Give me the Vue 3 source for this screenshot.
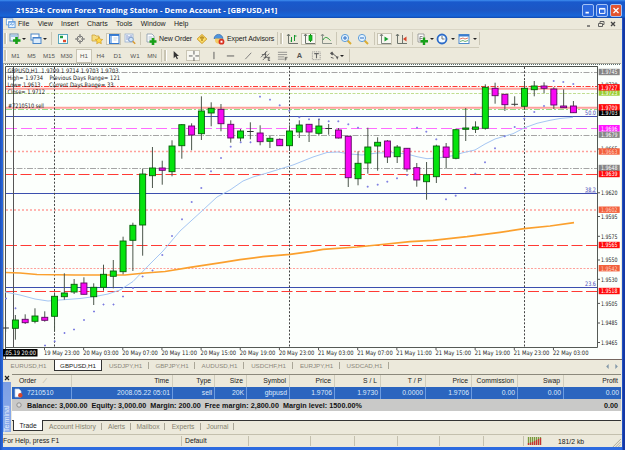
<template>
  <div class="window">
    <svg class="defs" width="0" height="0">
      <symbol id="add" viewBox="0 0 12 12">
        <rect x="1" y="1" width="8" height="7" fill="#eef6fb" stroke="#6d8fae" />
        <path d="M2 3h6" stroke="#6aa1d8" />
        <path d="M7.5 4v7M4 7.5h7.5" stroke="#18a018" stroke-width="2.6" />
      </symbol>
      <symbol id="profiles" viewBox="0 0 12 12">
        <rect x="1" y="1" width="8" height="6" fill="#fff" stroke="#4a86c8" />
        <rect x="3" y="4.5" width="8" height="6" fill="#dcecfb" stroke="#4a86c8" />
        <path d="M3 5h8" stroke="#3f7fd0" />
      </symbol>
      <symbol id="market" viewBox="0 0 12 12">
        <rect x="1.5" y="1.5" width="9" height="9" fill="#f8fffd" stroke="#58a5bd" />
        <path d="M3 4h3" stroke="#1f9b40" stroke-width="2.4" />
        <path d="M6 8h3" stroke="#e04b2c" stroke-width="2.4" />
      </symbol>
      <symbol id="target" viewBox="0 0 12 12">
        <circle cx="6" cy="6" r="3" fill="none" stroke="#777" />
        <path d="M6 1v4M6 7v4M1 6h4M7 6h4" stroke="#777" />
      </symbol>
      <symbol id="star" viewBox="0 0 12 12">
        <path d="M1 2h3l1 1h3v5H1z" fill="#f6dd80" stroke="#cda23a" stroke-width=".8" />
        <path d="M8 4l1.2 2.2 2.5.3-1.8 1.7.4 2.5L8 9.500l-2.300 1.200.4-2.500-1.800-1.700 2.500-.3z" fill="#ffd84a" stroke="#d19a20" stroke-width=".7" />
      </symbol>
      <symbol id="nav" viewBox="0 0 12 12">
        <rect x="1.500" y="1.500" width="9.500" height="9" fill="#fff" stroke="#3478cf" />
        <path d="M1 2.200h10" stroke="#3478cf" stroke-width="1.500" />
        <path d="M3 3v7" stroke="#8dbaf0" stroke-width="2" />
        <path d="M5.500 5h4M5.500 7h3" stroke="#b8c8d8" stroke-width=".8" />
      </symbol>
      <symbol id="tester" viewBox="0 0 12 12">
        <rect x="1" y="1" width="8" height="8" fill="#edf3fb" stroke="#9ab0cf" stroke-width=".8" />
        <path d="M3 2v5M5 3v5M7 2v4" stroke="#7689c4" stroke-width=".8" />
        <circle cx="7" cy="6.500" r="2.300" fill="#cfe4fa" stroke="#6d8fc0" stroke-width=".8" />
        <path d="M8.700 8.300l2.500 2.500" stroke="#d89a30" stroke-width="1.500" />
      </symbol>
      <symbol id="order" viewBox="0 0 12 12">
        <path d="M2 1h5l2 2v6H2z" fill="#fff" stroke="#8798ab" stroke-width=".8" />
        <path d="M3.500 4h4M3.500 6h4" stroke="#8ba0b8" stroke-width=".7" />
        <path d="M8 5v7M4.500 8.500h7" stroke="#18a018" stroke-width="2.600" />
      </symbol>
      <symbol id="gold" viewBox="0 0 12 12">
        <path d="M6 1.500L10.800 6 6 10.500 1.200 6z" fill="#fbdd69" stroke="#cf9a22" />
        <path d="M4 5.300l2-1.600 2 1.600M6 5v3" stroke="#966300" fill="none" />
      </symbol>
      <symbol id="expert" viewBox="0 0 12 12">
        <path d="M1 5.500C2 0 9 0 10 5.500z" fill="#4f94dc" stroke="#2b67b0" stroke-width=".7" />
        <path d="M2 5.500h7.500v1.500a3.700 3.700 0 0 1-7.500 0z" fill="#f3cb67" />
        <circle cx="8.500" cy="8.700" r="2.900" fill="#d83020" />
        <path d="M7.500 7.700h2v2h-2z" fill="#fff" />
      </symbol>
      <symbol id="bars" viewBox="0 0 12 12">
        <path d="M2.500 1v9.500H12M1 3l1.500-2L4 3" fill="none" stroke="#6d746d" />
        <path d="M5.500 4v5M4.500 8h1M8.500 2v6M8.500 3h2" stroke="#189830" />
      </symbol>
      <symbol id="candle" viewBox="0 0 12 12">
        <path d="M2.500 1v9.500H12M1 3l1.500-2L4 3" fill="none" stroke="#6d746d" />
        <path d="M7.500 1v8" stroke="#128a12" />
        <rect x="6" y="2.500" width="3" height="5" fill="#0fc422" stroke="#128a12" stroke-width=".7" />
      </symbol>
      <symbol id="line" viewBox="0 0 12 12">
        <path d="M2.500 1v9.500H12M1 3l1.500-2L4 3" fill="none" stroke="#8a918a" />
        <path d="M3 7C5 3 7 4 10.500 7.500" fill="none" stroke="#2a9d3c" />
      </symbol>
      <symbol id="zoomin" viewBox="0 0 12 12">
        <path d="M7.500 7.500l3.500 3.500" stroke="#dcac32" stroke-width="2" />
        <circle cx="5" cy="5" r="3.600" fill="#e2f2ff" stroke="#5f9dd8" />
        <path d="M3 5h4M5 3v4" stroke="#2f6ec4" />
      </symbol>
      <symbol id="zoomout" viewBox="0 0 12 12">
        <path d="M7.500 7.500l3.500 3.500" stroke="#dcac32" stroke-width="2" />
        <circle cx="5" cy="5" r="3.600" fill="#e2f2ff" stroke="#5f9dd8" />
        <path d="M3 5h4" stroke="#2f6ec4" />
      </symbol>
      <symbol id="scroll" viewBox="0 0 12 12">
        <path d="M2.500 1v9.500H12M1 3l1.500-2L4 3" fill="none" stroke="#7c837c" />
        <path d="M5.500 3.500l4 2.500-4 2.500z" fill="#18a030" />
      </symbol>
      <symbol id="shift" viewBox="0 0 12 12">
        <path d="M2.500 1v9.500H12M1 3l1.500-2L4 3M7.500 2v8" fill="none" stroke="#6d746d" />
        <path d="M11.500 3.500L8 6l3.500 2.500z" fill="#d8452a" />
      </symbol>
      <symbol id="indicators" viewBox="0 0 12 12">
        <path d="M2 1h6v8H2z" fill="#fff" stroke="#8c8c8c" stroke-width=".8" />
        <path d="M4 8V3.500h2.500M3.500 5.500h3" stroke="#777" fill="none" stroke-width=".8" />
        <path d="M8 4.500V12M4.500 8.300h7.500" stroke="#18a018" stroke-width="2.400" />
      </symbol>
      <symbol id="clock" viewBox="0 0 12 12">
        <circle cx="6" cy="6" r="4.500" fill="#f4fbff" stroke="#2d6cc8" stroke-width="1.800" />
        <path d="M6 3v3h2.500" fill="none" stroke="#555" stroke-width=".8" />
      </symbol>
      <symbol id="template" viewBox="0 0 12 12">
        <rect x="1" y="1.500" width="10" height="9" fill="#fff" stroke="#4e8acb" />
        <path d="M1 2.500h10" stroke="#3b7dcf" stroke-width="2" />
        <path d="M2 6l3-1 2 1 3-1" fill="none" stroke="#d5583f" stroke-width=".8" />
        <path d="M2 8.500l3-1 2 1 3-1" fill="none" stroke="#43a052" stroke-width=".8" />
      </symbol>
      <symbol id="cursor" viewBox="0 0 12 12">
        <path d="M4 1v8l2-1.800 1.500 3 1.200-.7L7.300 6.600h2.500z" fill="#333" />
      </symbol>
      <symbol id="cross" viewBox="0 0 12 12">
        <path d="M6.500 1v4M6.500 8v4M1 6.500h4M8 6.500h4" stroke="#555" />
      </symbol>
      <symbol id="vline" viewBox="0 0 12 12"><path d="M6.500 2v8" stroke="#555" /></symbol>
      <symbol id="hline" viewBox="0 0 12 12"><path d="M2 6.500h8" stroke="#555" /></symbol>
      <symbol id="trend" viewBox="0 0 12 12"><path d="M2.500 10L9 3" stroke="#777" /></symbol>
      <symbol id="channel" viewBox="0 0 12 12">
        <path d="M1 8l7-7M3 11l7-7M2 5h5M4 8h5M6 2v7" stroke="#555" stroke-width=".9" />
        <path d="M11 8H9v3.500h2M9 9.700h2" stroke="#444" stroke-width=".8" fill="none" />
      </symbol>
      <symbol id="fibo" viewBox="0 0 12 12">
        <path d="M1 2.500h10M1 5h10M1 7.500h7M1 10h7" stroke="#777" stroke-width=".8" />
        <path d="M9 11.500V8h2.500M9 9.700h2" stroke="#444" stroke-width=".8" fill="none" />
      </symbol>
      <symbol id="label" viewBox="0 0 12 12">
        <rect x="1.500" y="2" width="8.500" height="8.500" fill="none" stroke="#888" stroke-dasharray="1 1" />
        <path d="M3.500 4h5M6 4v5" stroke="#666" stroke-width="1.200" />
      </symbol>
      <symbol id="arrows" viewBox="0 0 12 12">
        <path d="M1 3.500L3.500 1.500 5 4 3.500 6zM7.500 7h3L9 10.500z" fill="#555" />
        <path d="M3.500 3.500l5 4M2 8l3 1" stroke="#555" />
      </symbol>
      <symbol id="app" viewBox="0 0 12 12">
        <rect x="1" y="1" width="10" height="10" fill="#3b83d8" stroke="#8fc2f4" stroke-width=".8" />
        <path d="M3 2v6M5.500 3v6M8.500 2v5M2 5l3-2 2 3 4-3" stroke="#e4f3ff" fill="none" stroke-width=".9" />
        <path d="M6 8h4v3H6z" fill="#a9d3f6" />
      </symbol>
      <symbol id="doc" viewBox="0 0 12 12">
        <rect x="1.500" y="1" width="7" height="6.500" fill="#fff" stroke="#6ca5e2" />
        <rect x="4" y="4" width="7" height="6.500" fill="#e6f3ff" stroke="#5d99dd" />
        <path d="M5 8l2-2 1 2 2-2M4 4.500h7" stroke="#5d99dd" fill="none" />
      </symbol>
    </svg>

    <header class="titlebar">
      <svg class="app-icon"><use href="#app" /></svg>
      <span class="title">215234: Crown Forex Trading Station - Demo Account - [GBPUSD,H1]</span>
      <div class="caption-buttons">
        <svg viewBox="0 0 12 12" class="cap"><path d="M3 8.500h4" stroke="#fff" stroke-width="2" /></svg>
        <svg viewBox="0 0 12 12" class="cap"><path d="M3 3.500h6.500v6H3zM3 4.300h6" fill="none" stroke="#fff" stroke-width="1.200" /></svg>
        <svg viewBox="0 0 12 12" class="cap close"><path d="M3 3l6 6M9 3l-6 6" stroke="#fff" stroke-width="1.600" /></svg>
      </div>
    </header>

    <div class="body">
      <nav class="menubar">
        <svg class="doc-icon"><use href="#doc" /></svg>
        <span v-for="m in menus" :key="m">{{ m }}</span>
        <div class="mdi-buttons">
          <svg viewBox="0 0 8 8"><path d="M2 6h3" stroke="#444" stroke-width="1.200" /></svg>
          <svg viewBox="0 0 8 8"><path d="M3 3.500V1.500h4v3H5.500M1.500 3.500h4v3h-4z" fill="none" stroke="#555" stroke-width=".9" /></svg>
          <svg viewBox="0 0 8 8"><path d="M2 2l4 4M6 2L2 6" stroke="#444" stroke-width="1.300" /></svg>
        </div>
      </nav>

      <div v-for="(bar, b) in toolbars" :key="b" :class="['toolbar', 'toolbar-' + b]">
        <div v-for="(t, i) in bar" :key="i" :class="['tool', t[0], { pressed: t[3] }]" :style="{ width: t[1] + 'px' }">
          <svg v-if="t[0] === 'icon'" class="icon"><use :href="'#' + t[2]" /></svg>
          <span v-else-if="t[2]">{{ t[2] }}</span>
        </div>
      </div>

      <svg class="chart" viewBox="3 63 618 296">
        <rect x="3" y="63" width="618" height="296" fill="#fcfffc" />
        <path d="M3 63.500h618" stroke="#a9a79c" />
        <path d="M3 64.500h618" stroke="#5c6f6b" stroke-dasharray="1 1" />
        <path d="M3.500 64v295" stroke="#aba99d" />
        <path d="M5.500 359V66.500H597" fill="none" stroke="#4c504c" />

        <line
          v-for="(l, i) in levels"
          :key="'l' + i"
          x1="6"
          x2="597"
          :y1="l[0]"
          :y2="l[0]"
          :stroke="l[1]"
          :stroke-width="l[3] || 1"
          :stroke-dasharray="l[2]"
        />
        <path d="M13.500 67V347" stroke="#555" />
        <path d="M54.500 67V347M289.500 67V347M524.500 67V347" stroke="#444" stroke-dasharray="2 1.700" />
        <polyline :points="fastAverage" fill="none" stroke="#a5c6f3" />
        <polyline :points="slowAverage" fill="none" stroke="#fba02e" stroke-width="1.700" />

        <path :d="sarPath" stroke="#7878e0" stroke-width=".9" />
        <g v-for="c in candles" :key="c.x">
          <path :d="`M${c.x} ${c.high}V${c.low}`" stroke="#4b564b" />
          <path v-if="c.type === 'd'" :d="`M${c.x - 3.300} ${c.open}h6.600`" stroke="#333" />
          <rect
            v-else
            :x="c.x - 3"
            :y="c.open"
            width="6"
            :height="c.close - c.open"
            :fill="c.type === 'g' ? '#05e40d' : '#f808f3'"
            :stroke="c.type === 'g' ? '#075c0b' : '#5c0860'"
            stroke-width=".9"
          />
        </g>

        <path d="M5 347.500H597.500V66" fill="none" stroke="#555a55" />
        <g class="fib">
          <text x="585" y="115" textLength="11" lengthAdjust="spacingAndGlyphs">50.0</text>
          <text x="585" y="191.700" textLength="11" lengthAdjust="spacingAndGlyphs">38.2</text>
          <text x="585" y="286" textLength="11" lengthAdjust="spacingAndGlyphs">23.6</text>
        </g>
        <g class="info">
          <text v-for="t in info" :key="t[0]" :x="t[1]" :y="t[2]" :textLength="t[3]" lengthAdjust="spacingAndGlyphs">{{ t[0] }}</text>
        </g>

        <g v-for="p in prices" :key="p[0]" class="price">
          <path v-if="!p[2]" :d="`M598 ${p[1]}h2`" stroke="#555" />
          <rect v-else x="598.700" :y="p[1] - 3.200" width="21" height="6.400" :fill="p[2]" />
          <text x="601" :y="p[1] + 2.300" textLength="16.500" lengthAdjust="spacingAndGlyphs" :fill="p[3] || (p[2] ? '#fff' : '#222')">{{ p[0] }}</text>
        </g>

        <g v-for="(d, i) in dates" :key="d" class="date">
          <path :d="`M${44.500 + i * 39.150} 348v2`" stroke="#555" />
          <text :x="44 + i * 39.150" y="355.300" textLength="35.500" lengthAdjust="spacingAndGlyphs">{{ d }}</text>
        </g>
        <rect x="3" y="349" width="34.500" height="7.500" fill="#000" />
        <text x="4" y="355.300" class="now" textLength="32" lengthAdjust="spacingAndGlyphs">.05.19 20:00</text>
      </svg>

      <div class="chart-tabs">
        <div v-for="t in chartTabs" :key="t[0]" :class="['chart-tab', { active: t[0] === 'GBPUSD,H1', plain: t[0] === 'EURUSD,H1' }]" :style="{ width: t[1] + 'px' }">
          {{ t[0] }}
        </div>
        <svg class="tab-arrows" viewBox="0 0 16 6"><path d="M4 0v6L1 3zM12 0v6l3-3z" fill="#8297a8" /></svg>
      </div>

      <section class="terminal">
        <aside class="side">
          <svg viewBox="0 0 8 8"><path d="M2 2l4 4M6 2L2 6" stroke="#222" stroke-width="1.200" /></svg>
          <div class="side-title">Terminal</div>
        </aside>
        <div class="grid-area">
          <div class="row head">
            <div v-for="(c, i) in columns" :key="i" class="cell">{{ c }}<i v-if="i === 0">∕</i></div>
          </div>
          <div class="row order">
            <div v-for="(c, i) in order" :key="i" class="cell">
              <svg v-if="i === 0" class="sheet" viewBox="0 0 9 10">
                <path d="M1 1h4l2 2v6H1z" fill="#fff" stroke="#b9c9e4" stroke-width=".7" />
                <circle cx="6.300" cy="7.300" r="2.200" fill="#d8452a" />
              </svg>
              {{ c }}
            </div>
          </div>
          <div class="balance">
            <svg class="bullet" viewBox="0 0 8 8"><circle cx="4" cy="4" r="2.200" fill="#ddd" stroke="#888" stroke-width=".9" /></svg>
            <span class="summary">Balance: 3,000.00&nbsp; Equity: 3,000.00&nbsp; Margin: 200.00&nbsp; Free margin: 2,800.00&nbsp; Margin level: 1500.00%</span>
            <span class="total">0.00</span>
          </div>
          <div class="blank"></div>
          <div class="panel-tabs">
            <div v-for="t in panelTabs" :key="t[0]" :class="['panel-tab', { active: t[0] === 'Trade' }]" :style="{ width: t[1] + 'px' }">{{ t[0] }}</div>
          </div>
        </div>
      </section>

      <footer class="status">
        <div v-for="(s, i) in status" :key="i" class="status-cell" :style="{ width: s[1] + 'px' }">{{ s[0] }}</div>
        <svg class="signal" viewBox="0 0 15 8">
          <path d="M1.500 0v8M3.500 0v8M5.500 0v8M7.500 0v8M9.500 0v8M11.500 0v8M13.500 0v8" stroke="#789a3c" stroke-width="1.300" />
          <path d="M1.500 6v2M3.500 5.500v2.500M5.500 5v3M7.500 4v4M9.500 3v5M11.500 2v6M13.500 1v7" stroke="#c83232" stroke-width="1.300" />
        </svg>
        <span class="traffic">181/2 kb</span>
        <svg class="grip-corner" viewBox="0 0 10 10"><path d="M1 10l9-9M4 10l6-6M7 10l3-3" stroke="#a8a594" /></svg>
      </footer>
    </div>
  </div>
</template>

<script setup>
const menus = ['File', 'View', 'Insert', 'Charts', 'Tools', 'Window', 'Help']

// [kind, width, icon or text, pressed]
const toolbars = [
  [
    ['grip', 5], ['icon', 13, 'add'], ['caret', 5], ['gap', 4], ['icon', 12, 'profiles'], ['caret', 6],
    ['sep', 6], ['icon', 17, 'market'], ['icon', 17, 'target'], ['icon', 17, 'star'], ['gap', 1],
    ['icon', 15, 'nav', true], ['icon', 17, 'tester'], ['sep', 4], ['icon', 17, 'order'],
    ['text', 33, 'New Order'], ['icon', 19, 'gold'], ['icon', 16, 'expert'], ['text', 49, 'Expert Advisors'],
    ['sep', 3], ['grip', 5], ['icon', 16, 'bars'], ['gap', 1], ['icon', 15, 'candle', true],
    ['icon', 19, 'line'], ['sep', 3], ['icon', 16, 'zoomin'], ['icon', 18, 'zoomout'], ['sep', 5],
    ['icon', 15, 'scroll', true], ['icon', 18, 'shift'], ['sep', 4], ['icon', 15, 'indicators'], ['caret', 5],
    ['icon', 16, 'clock'], ['caret', 6], ['icon', 16, 'template'], ['caret', 5], ['sep', 5],
  ],
  [
    ['grip', 5], ['period', 15, 'M1'], ['period', 17, 'M5'], ['period', 18, 'M15'], ['period', 17, 'M30'],
    ['gap', 1], ['period', 16, 'H1', true], ['period', 17, 'H4'], ['period', 17, 'D1'], ['period', 18, 'W1'],
    ['period', 16, 'MN'], ['sep', 3], ['grip', 5], ['icon', 14, 'cursor'], ['gap', 4],
    ['icon', 14, 'cross', true], ['icon', 26, 'vline'], ['icon', 9, 'hline'], ['icon', 26, 'trend'],
    ['icon', 9, 'channel'], ['icon', 25, 'fibo'], ['letter', 9, 'A'], ['icon', 25, 'label'],
    ['icon', 10, 'arrows'], ['caret', 6], ['sep', 8],
  ],
]

// [y, color, dash, width]
const red = '#ff3a34'
const gray = '#a5a5a5'
const salmon = '#ffa09a'
const blue = '#3b4fae'
const levels = [
  [72.5, gray, '6 1.5 1.5 1.5'],
  [86.500, red, '5 1.500 1.500 1.500'],
  [88.800, '#ffa39d', '', 2],
  [93.500, '#c0dd90', '3 1.500'],
  [107.800, '#ffa09c', '', 2],
  [109.500, '#91dc85', '6 2 2 2'],
  [116.500, blue],
  [128.500, '#ff6cff', '11 4'],
  [135.500, gray, '6 1.500 1.500 1.500'],
  [151.500, salmon, '2 2', 1.400],
  [168.500, gray, '6 1.500 1.500 1.500'],
  [174.500, red, '11 3.500'],
  [193.500, blue],
  [210, salmon, '2 2', 1.400],
  [245.500, red, '11 3.500'],
  [268.500, salmon, '2 1.500'],
  [287.500, blue],
  [291.500, red, '11 3.500'],
]

const info = [
  ['GBPUSD,H1  1.9709 1.9714 1.9703 1.9703', 7.5, 73.3, 111],
  ['High= 1.9734', 7.5, 79.900, 35.500],
  ['Previous Days Range= 121', 49.500, 79.900, 70.500],
  ['Low= 1.9613', 7.500, 87, 33],
  ['Current Days.Range= 33', 49, 87, 64.500],
  ['Close= 1.9712', 7.500, 94.200, 37.500],
  ['#7210510 sell', 8, 108, 36],
]

// tagged prices come after the plain ones they cover
const prices = [
  ['1.9730', 84.5],
  ['1.9665', 149],
  ['1.9745', 72, '#858585'],
  ['1.9723', 92.500, '#9acd32'],
  ['1.9727', 87.300, '#ff0a0a'],
  ['1.9703', 112.800, '#000'],
  ['1.9709', 107.300, '#ff0a0a'],
  ['1.9679', 134.700, '#858585'],
  ['1.9696', 128.200, '#ff14ff'],
  ['1.9663', 151.500, '#f2603c', '#ffd0c0'],
  ['1.9648', 168, '#858585'],
  ['1.9639', 174, '#ff0a0a'],
  ['1.9620', 192.800],
  ['1.9602', 209.700, '#f2603c', '#ffd0c0'],
  ['1.9595', 216.500],
  ['1.9575', 236.300],
  ['1.9565', 245, '#ff0a0a'],
  ['1.9550', 260],
  ['1.9542', 268.200, '#f2603c', '#ffd0c0'],
  ['1.9530', 279.300],
  ['1.9518', 291, '#ff0a0a'],
  ['1.9505', 303.400],
  ['1.9485', 323],
  ['1.9465', 342.500],
]

const dates = ['19 May 23:00']
for (const day of [20, 21]) {
  for (const h of ['03', '07', '11', '15', '19', '23']) dates.push(`${day} May ${h}:00`)
}
dates.push('22 May 03:00')

// high, body top, body bottom, low, g = up, m = down, d = doji
const bars = [
  [321, 328, 328, 332, 'd'],
  [315, 320, 328.3, 339.7, 'g'],
  [314.3, 319.3, 322.7, 324, 'm'],
  [308.3, 316, 321.3, 323.3, 'g'],
  [311.3, 317.3, 320.3, 321.7, 'm'],
  [292.7, 296.3, 316.3, 331.7, 'g'],
  [273.3, 293, 296.7, 299.7, 'g'],
  [279, 284.3, 292, 294, 'g'],
  [277.3, 283, 294.3, 294.5, 'm'],
  [283.3, 287.3, 296.7, 305, 'g'],
  [264.7, 274.3, 287.3, 290.7, 'g'],
  [260, 271, 276.3, 288.3, 'g'],
  [236.7, 241, 271.7, 274.3, 'g'],
  [222.7, 225.3, 240.3, 271, 'g'],
  [168.7, 174, 225, 255.7, 'g'],
  [147, 168, 175.7, 188, 'g'],
  [160.7, 168, 170.3, 184.7, 'm'],
  [140.3, 146, 171.7, 176.3, 'g'],
  [124, 124.7, 145.7, 158.7, 'g'],
  [123.3, 126, 135, 150.3, 'm'],
  [96.3, 111, 133.7, 140, 'g'],
  [102.3, 108.3, 113, 126.3, 'g'],
  [104, 109.3, 123.7, 131.3, 'm'],
  [120.3, 124.3, 138, 142.7, 'm'],
  [129, 131, 138, 141.3, 'g'],
  [122.3, 131.5, 131.5, 139.3, 'd'],
  [125.3, 133, 141.7, 145.3, 'm'],
  [136, 138.3, 141.3, 148, 'g'],
  [138.3, 139.3, 145.7, 146, 'm'],
  [125.3, 131, 145.7, 151, 'g'],
  [120.3, 125, 132, 138, 'g'],
  [124, 124.3, 132, 142, 'm'],
  [119.3, 126, 133.3, 135, 'g'],
  [124, 128.5, 128.5, 134.7, 'd'],
  [128, 130, 138, 138.5, 'm'],
  [135.7, 136.3, 177.7, 187, 'm'],
  [151.3, 163.3, 178.7, 185.3, 'g'],
  [127.7, 147, 163, 173.7, 'g'],
  [137.3, 142.3, 146, 170.7, 'g'],
  [140, 141, 157, 163, 'm'],
  [145, 147, 156.7, 163, 'g'],
  [148, 148.3, 169, 171.7, 'm'],
  [163, 167.7, 180, 186.7, 'm'],
  [162, 174.7, 181.7, 199.7, 'g'],
  [144.7, 146, 176.7, 183, 'g'],
  [143, 147, 157.3, 168.7, 'm'],
  [128.7, 129.7, 158.3, 159.3, 'g'],
  [108, 128, 129.3, 141, 'g'],
  [121.3, 127, 129.3, 133, 'g'],
  [84.3, 87.3, 128.3, 129.7, 'g'],
  [82.7, 88.3, 95.7, 103.7, 'm'],
  [94, 94.3, 104.7, 111, 'm'],
  [96.3, 104.3, 104.3, 106.3, 'd'],
  [81, 88.3, 106.3, 108, 'g'],
  [81, 86, 89.7, 96.3, 'g'],
  [82.3, 86, 88.3, 93.3, 'm'],
  [87.3, 89, 105, 109, 'm'],
  [89.3, 106, 107.7, 108, 'm'],
  [101, 106, 112.7, 113, 'm'],
]
const candles = bars.map((b, i) => ({
  x: 5.6 + i * 9.79,
  high: b[0],
  open: b[1],
  close: b[2],
  low: b[3],
  type: b[4],
}))

const sar = [
  [6, 298.5], [15.5, 308.3], [45, 345.5], [54.7, 341.3], [64.5, 333], [74, 329.5], [84, 320], [94, 311.5],
  [103.5, 304.5], [113.5, 304.5], [123, 296.5], [133, 288], [142.6, 276.5], [152.5, 270.5], [162.3, 255],
  [172, 236], [182, 219.3], [191.7, 202], [201.3, 188], [211, 171.3], [221, 158], [230.7, 146.7],
  [240.7, 142.3], [250.5, 142.3], [260, 96.7], [270, 99.7], [279.7, 105.3], [289.3, 110.7], [299.3, 117.3],
  [309, 119.3], [319, 119.3], [328.7, 121.3], [338.3, 121.3], [348.3, 124.3], [358, 127.7], [367.7, 186.7],
  [377.7, 184.7], [387.3, 181.7], [397, 178.3], [407, 175], [417, 127.7], [426.3, 131.7], [436.3, 139.3],
  [446, 199.3], [455.7, 195.7], [465.3, 188], [475.3, 173.7], [485, 162.3], [495, 148.3], [504.7, 136.3],
  [514.7, 127], [524.3, 118.7], [534.3, 112], [544, 106], [553.7, 81], [563.3, 82], [573.3, 84],
]
const sarPath = sar.map(([x, y]) => `M${x - 1} ${y}h2M${x} ${y - 1}v2`).join('')

const fastAverage =
  '5,292 20,295 35,299 48,301 60,300 80,298.5 95,296.5 108,294 120,290 133,281.5 150,264 163,251 180,231 203,210 217,197 230,190 243,181 253,177 267,173 280,169 293,165 313,157 327,152.5 338,152 350,154 362,155 377,153 393,152.7 407,154 417,156.7 427,158.7 440,157.7 453,155.7 463,152.7 475,150 485,144 495,139 513,133.7 524,128 537,123.3 550,120.3 560,118.5 573,117.3'
const slowAverage =
  '6,272.5 20,273 37,274.5 75,275 125,275 145,273 165,271.5 190,267.3 223,262.3 240,259.7 263,256.7 290,254.3 310,251.7 323,249.3 357,247 377,245 410,241.7 433,240.3 467,236.7 500,232.3 524,228.7 550,226 574,222.7'

const chartTabs = [
  ['EURUSD,H1', 51], ['GBPUSD,H1', 48], ['USDJPY,H1', 47], ['GBPJPY,H1', 46], ['AUDUSD,H1', 49],
  ['USDCHF,H1', 49], ['EURJPY,H1', 47], ['USDCAD,H1', 49],
]

const columns = ['Order', 'Time', 'Type', 'Size', 'Symbol', 'Price', 'S / L', 'T / P', 'Price', 'Commission', 'Swap', 'Profit']
const order = ['7210510', '2008.05.22 05:01', 'sell', '20K', 'gbpusd', '1.9706', '1.9730', '0.0000', '1.9706', '0.00', '0.00', '0.00']
const panelTabs = [['Trade', 30], ['Account History', 59], ['Alerts', 29], ['Mailbox', 34], ['Experts', 36], ['Journal', 33]]
const status = [['For Help, press F1', 179], ['Default', 67], ['', 62], ['', 44], ['', 43], ['', 42], ['', 44], ['', 40]]
</script>

<style>
body {
  margin: 0;
  overflow: hidden;
}
</style>

<style scoped>
.window {
  width: 625px;
  height: 450px;
  box-sizing: border-box;
  padding: 0 3px 3px;
  background: linear-gradient(90deg, #1c50ba 0, #2d6be0 3px, #2d6be0 622px, #1538a4 623px);
  font-family: 'Liberation Sans', Arial, sans-serif;
  font-size: 7.2px;
  color: #1a1a1a;
  overflow: hidden;
}

.window * {
  box-sizing: border-box;
  white-space: nowrap;
}

.defs {
  position: absolute;
}

.titlebar {
  display: flex;
  align-items: center;
  height: 18px;
  margin: 0 -3px;
  padding: 2px 3px 0 3px;
  background: linear-gradient(#3f8ff0 0, #1959cc 2px, #1c56c4 10px, #1765d8 16px, #1048ae 18px);
}

.app-icon {
  width: 11px;
  height: 12px;
}

.title {
  margin-left: 2px;
  font-family: 'Open Sans', 'Noto Sans', sans-serif;
  font-weight: 700;
  font-size: 7.6px;
  letter-spacing: 0.11px;
  color: #fff;
}

.caption-buttons {
  display: flex;
  gap: 2px;
  margin-left: auto;
}

.cap {
  width: 12px;
  height: 13px;
  border: 1px solid #a4c2f5;
  border-radius: 2px;
  background: #2c69df;
}

.cap.close {
  background: #e2542f;
}

.body {
  width: 619px;
  height: 429px;
  background: #ece9db;
}

.menubar {
  display: flex;
  align-items: center;
  gap: 8.4px;
  height: 12px;
  padding-left: 2px;
  border-bottom: 1px solid #dad6c6;
  font-size: 7px;
}

.doc-icon {
  width: 11px;
  height: 11px;
  margin-right: -6.4px;
}

.mdi-buttons {
  display: flex;
  gap: 4px;
  margin-left: auto;
  padding-right: 5px;
}

.mdi-buttons svg {
  width: 8px;
  height: 8px;
}

.toolbar {
  display: flex;
  align-items: center;
  height: 18px;
  border-bottom: 1px solid #d0ccba;
}

.toolbar-0 {
  width: 476px;
}

.toolbar-1 {
  height: 15px;
  border-bottom: 0;
}

.tool {
  display: flex;
  flex: none;
  align-items: center;
  justify-content: center;
  height: 15px;
}

.toolbar-1 .tool {
  height: 14px;
}

.icon {
  flex: none;
  width: 12px;
  height: 12px;
}

.toolbar-1 .icon {
  width: 11px;
  height: 11px;
}

.pressed {
  background: #f8f7f1;
  border: 1px solid #c9c5b4;
}

.text {
  font-size: 7px;
  letter-spacing: -0.09px;
  justify-content: flex-start;
}

.period {
  font-size: 6.2px;
  color: #555;
}

.letter {
  font-size: 7.5px;
  font-weight: 700;
  color: #555;
}

.sep::before {
  content: '';
  width: 1px;
  height: 13px;
  background: #cbc7b6;
}

.grip::before {
  content: '';
  width: 2px;
  height: 11px;
  background: #c9c5b3;
  border-right: 1px solid #fff;
}

.caret::before {
  content: '';
  border: 2px solid transparent;
  border-top-color: #222;
  border-bottom: 0;
}

.chart {
  display: block;
  width: 618px;
  height: 296px;
}

.chart text {
  font-family: 'DejaVu Sans', sans-serif;
  font-size: 6.1px;
  white-space: pre;
}

.fib text {
  fill: #4a4ab8;
  text-decoration: underline;
}

.info text {
  fill: #222;
}

.date text {
  fill: #222;
}

.chart .now {
  fill: #fff;
}

.chart-tabs {
  display: flex;
  height: 13px;
  border-top: 1px solid #75665f;
  color: #8b887c;
  font-size: 6.2px;
}

.chart-tab {
  position: relative;
  height: 11px;
  line-height: 11px;
  text-align: center;
}

.chart-tab:not(.active):not(.plain)::after,
.panel-tab:not(.active)::after {
  content: '';
  position: absolute;
  right: 0;
  top: 2px;
  height: 7px;
  border-right: 1px solid #aaa697;
}

.chart-tab.active {
  background: #fff;
  border: 1px solid #333;
  border-top: 0;
  color: #222;
}

.tab-arrows {
  width: 16px;
  height: 5px;
  margin: 4px 2px 0 auto;
}

.terminal {
  display: flex;
  height: 62px;
  padding-top: 2px;
}

.side {
  width: 9px;
}

.side svg {
  display: block;
  width: 8px;
  height: 8px;
}

.side-title {
  width: 8px;
  height: 50px;
  background: linear-gradient(#8badec, #7c9ee4);
  color: #e6eefc;
  font-size: 7px;
  line-height: 8px;
  writing-mode: vertical-rl;
  transform: rotate(180deg);
}

.grid-area {
  flex: 1;
  margin-right: 1px;
  border-top: 1px solid #8c897c;
}

.row {
  display: grid;
  grid-template-columns: 60px 101px 42px 32px 43px 45px 46px 45px 46px 46px 46px 1fr;
  height: 12px;
  line-height: 12px;
  font-size: 6.8px;
}

.cell {
  padding-right: 3px;
  text-align: right;
  border-right: 1px solid #d0cdbd;
}

.cell:first-child {
  display: flex;
  align-items: center;
  padding-left: 7px;
  text-align: left;
}

.cell i {
  margin-left: 8px;
  color: #aaa697;
}

.cell:last-child {
  border-right: 0;
}

.order {
  background: #2b65bf;
  color: #dbe8fb;
}

.order .cell {
  padding-right: 2px;
  border-right-color: #6c9be0;
}

.order .cell:first-child {
  padding-left: 2px;
}

.sheet {
  width: 9px;
  height: 10px;
  margin-right: 4px;
}

.balance {
  display: flex;
  align-items: center;
  height: 12px;
  padding: 0 3px;
  background: #c9c9c8;
  font-size: 7.2px;
  font-weight: 700;
  color: #111;
}

.summary {
  letter-spacing: 0.03px;
}

.bullet {
  width: 8px;
  height: 8px;
  margin-right: 4px;
}

.total {
  margin-left: auto;
}

.blank {
  height: 9px;
  background: #fff;
}

.panel-tabs {
  display: flex;
  height: 13px;
  padding-left: 1px;
  border-top: 1px solid #333;
  color: #85826f;
  font-size: 6.7px;
}

.panel-tab {
  position: relative;
  height: 11px;
  line-height: 11px;
  text-align: center;
}

.panel-tab.active {
  margin-top: -1px;
  background: #fff;
  border: 1px solid #333;
  border-top: 0;
  color: #222;
}

.status {
  display: flex;
  align-items: center;
  height: 13px;
  border-top: 1px solid #c4c0ae;
  font-size: 6.8px;
}

.status-cell {
  height: 10px;
  line-height: 10px;
  border-right: 1px solid #c4c0ae;
}

.status-cell + .status-cell {
  padding-left: 3px;
}

.signal {
  width: 15px;
  height: 8px;
  margin-left: 3px;
}

.traffic {
  margin-left: 16px;
}

.grip-corner {
  width: 9px;
  height: 9px;
  margin: 2px 1px 0 auto;
}
</style>
